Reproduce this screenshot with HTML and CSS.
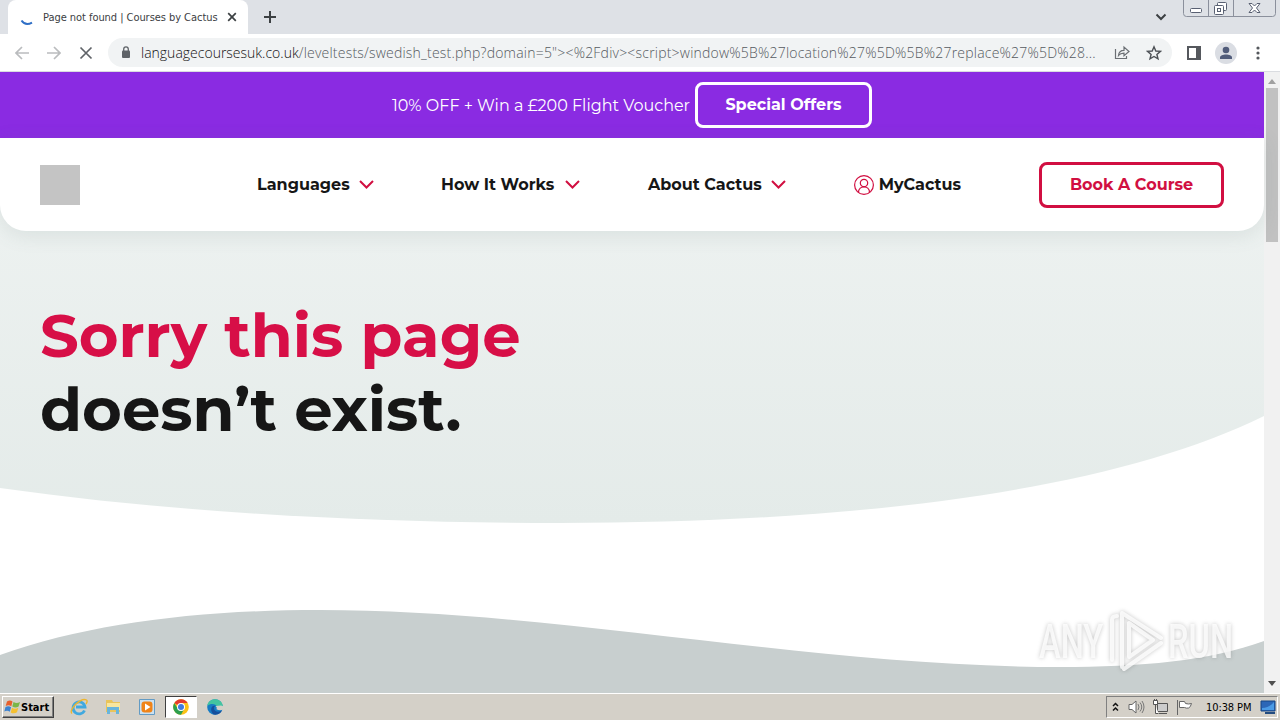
FILE: index.html
```html
<!DOCTYPE html>
<html lang="en">
<head>
<meta charset="UTF-8">
<meta name="viewport" content="width=device-width, initial-scale=1.0">
<title>Page not found | Courses by Cactus</title>
<link rel="stylesheet" href="styles.css">
</head>
<body>
<div class="tab-strip">
    <div class="tab">
        <svg class="spinner" width="16" height="16" viewBox="0 0 16 16"><path d="M2.500 8.500C5 12.200 9 12.800 13 10.600" fill="none" stroke="#2f6fc6" stroke-width="2"/></svg>
        <span class="tab-title">Page not found | Courses by Cactus</span>
        <svg class="tab-close" width="10" height="10" viewBox="0 0 10 10"><path d="M1.200 1.200l7.600 7.600M8.800 1.200L1.200 8.800" stroke="#3c4043" stroke-width="1.700"/></svg>
    </div>
    <svg class="new-tab" width="12" height="12" viewBox="0 0 12 12"><path d="M6 0v12M0 6h12" stroke="#3c4043" stroke-width="2"/></svg>
    <svg class="tab-search" width="12" height="8" viewBox="0 0 12 8"><path d="M1.500 1.500L6 6l4.500-4.500" fill="none" stroke="#3c4043" stroke-width="2"/></svg>
    <svg class="window-buttons" width="94" height="18" viewBox="0 0 94 18">
        <path d="M.5 0v13.500q0 3 3 3h86q3 0 3-3V0M25.500 0v16M50.500 0v16" fill="none" stroke="#8b909c"/>
        <rect x="7.500" y="8.500" width="11" height="4" rx="1" fill="#fff" stroke="#596072"/>
        <rect x="34.500" y="2.500" width="9" height="8" rx="1" fill="#fff" stroke="#596072"/>
        <rect x="31.500" y="5.500" width="9" height="9" rx="1" fill="#fff" stroke="#596072"/>
        <rect x="34.500" y="8.500" width="3" height="3" fill="none" stroke="#596072"/>
        <path d="M66 3.500h3l2.500 2.500L74 3.500h3L73.500 8l3.500 4.500h-3L71.500 10 69 12.500h-3L69.500 8z" fill="#fff" stroke="#596072"/>
    </svg>
</div>

<div class="toolbar">
    <div class="nav-buttons">
        <svg width="14" height="14" viewBox="0 0 14 14"><path d="M14 7H1.500M7 1L1 7l6 6" fill="none" stroke="#babcbe" stroke-width="1.700"/></svg>
        <svg width="14" height="14" viewBox="0 0 14 14"><path d="M0 7h12.500M7 1l6 6-6 6" fill="none" stroke="#babcbe" stroke-width="1.700"/></svg>
        <svg width="14" height="14" viewBox="0 0 14 14"><path d="M1.500 1.500l11 11M12.500 1.500l-11 11" stroke="#5f6368" stroke-width="1.700"/></svg>
    </div>
    <div class="address-bar">
        <svg class="lock" width="10" height="13" viewBox="0 0 10 13"><rect x="1" y="4.500" width="8" height="7.500" rx="1" fill="#5f6368"/><path d="M2.700 5V3.200a2.300 2.300 0 0 1 4.600 0V5" fill="none" stroke="#5f6368" stroke-width="1.300"/></svg>
        <span class="url"><span class="host">languagecoursesuk.co.uk</span><span class="path">/leveltests/swedish_test.php?domain=5"&gt;&lt;%2Fdiv&gt;&lt;script&gt;window%5B%27location%27%5D%5B%27replace%27%5D%28...</span></span>
        <svg class="share" width="16" height="16" viewBox="0 0 16 16"><path d="M1.500 4v9.500h11V11M4.500 10.500c.3-3.500 2.200-5.200 5.500-5.200V2l5 4.500-5 4.200V8.200c-2.500 0-4.200.6-5.500 2.300z" fill="none" stroke="#6b6f74" stroke-width="1.200"/></svg>
        <svg class="star" width="16" height="16" viewBox="0 0 16 16"><path d="M8 1.800l1.800 4.200 4.600.4-3.500 3 1.100 4.500L8 11.500l-4 2.400 1.100-4.500-3.500-3 4.600-.4z" fill="none" stroke="#4d5156" stroke-width="1.400"/></svg>
    </div>
    <svg class="side-panel" width="14" height="14" viewBox="0 0 14 14"><path d="M1 1h12v12H1z" fill="#fff" stroke="#55585d" stroke-width="2"/><path d="M9 1h5v12H9z" fill="#55585d"/></svg>
    <svg class="profile" width="22" height="22" viewBox="0 0 22 22"><circle cx="11" cy="11" r="11" fill="#dadde3"/><circle cx="11" cy="8" r="3.300" fill="#515c7a"/><path d="M5 17v-1.500c0-4 12-4 12 0V17z" fill="#515c7a"/></svg>
    <svg class="menu" width="4" height="14" viewBox="0 0 4 14"><g fill="#55585d"><circle cx="2" cy="2" r="1.600"/><circle cx="2" cy="7" r="1.600"/><circle cx="2" cy="12" r="1.600"/></g></svg>
</div>

<div class="viewport">
    <div class="page">
        <div class="promo">
            <span class="promo-text">10% OFF + Win a £200 Flight Voucher</span>
            <a class="btn btn-light">Special Offers</a>
        </div>
        <div class="hero">
            <svg class="waves" width="1264" height="555" viewBox="0 0 1264 555">
                <defs>
                    <linearGradient id="heroFill" x1="0" y1="0" x2="0" y2="1">
                        <stop offset="0" stop-color="#eff3f2"/>
                        <stop offset="1" stop-color="#e4ebe9"/>
                    </linearGradient>
                </defs>
                <path d="M0 0H1264V278C1110 354 850 385 560 385C360 385 170 374 0 350Z" fill="url(#heroFill)"/>
                <path d="M0 517C90 485 200 472 320 472C560 472 810 529 1060 529C1140 529 1210 523 1264 503V555H0Z" fill="#c8cfcf"/>
            </svg>
            <header class="site-header">
                <div class="logo"></div>
                <nav class="nav">
                    <a class="nav-item languages">Languages <svg width="15" height="9" viewBox="0 0 15 9"><path d="M1 1l6.500 6.500L14 1"/></svg></a>
                    <a class="nav-item how">How It Works <svg width="15" height="9" viewBox="0 0 15 9"><path d="M1 1l6.500 6.500L14 1"/></svg></a>
                    <a class="nav-item about">About Cactus <svg width="15" height="9" viewBox="0 0 15 9"><path d="M1 1l6.500 6.500L14 1"/></svg></a>
                    <a class="nav-item account"><svg width="20" height="20" viewBox="0 0 20 20"><circle cx="10" cy="10" r="9.400"/><circle cx="10" cy="8" r="3.700"/><path d="M4.500 17.500c0-7.500 11-7.500 11 0"/></svg> MyCactus</a>
                </nav>
                <a class="btn btn-red">Book A Course</a>
            </header>
            <h1><span class="line-red">Sorry this page</span><span class="line-dark">doesn’t exist.</span></h1>
        </div>
    </div>
    <div class="scrollbar">
        <svg width="8" height="5" viewBox="0 0 8 5"><path d="M0 5l4-5 4 5z" fill="#a0a0a0"/></svg>
        <div class="thumb"></div>
        <svg width="8" height="5" viewBox="0 0 8 5"><path d="M0 0l4 5 4-5z" fill="#505050"/></svg>
    </div>
    <div class="watermark">
        <span class="any">ANY</span>
        <svg width="60" height="64" viewBox="0 0 60 64"><path d="M7 51V11q0-4 5-4M17 58V4l39 25M19 60l37-26M24 14v34l24-17z" fill="none" stroke="#fff" stroke-opacity=".8" stroke-width="4" stroke-linejoin="round" stroke-linecap="round"/></svg>
        <span class="run">RUN</span>
    </div>
</div>

<div class="taskbar">
    <div class="start">
        <svg width="17" height="16" viewBox="0 0 17 16"><path d="M3 2.500q3-2 5.500 0L7.300 7.300q-2.500-2-5.600-.3z" fill="#e8602c"/><path d="M9.500 3q3 2 6.500 0l-1.400 4.600q-3 2-6.300 0z" fill="#7ab648"/><path d="M1.500 8q3-1.800 5.600.2l-1.300 4.600q-2.500-1.800-5.500-.2z" fill="#3d83d0"/><path d="M8 8.800q3 2 6.300 0L13 13.300q-3 2-6.300.2z" fill="#f5c030"/></svg>
        <span>Start</span>
    </div>
    <div class="launchers">
        <div class="launcher"><svg width="18" height="18" viewBox="0 0 18 18"><path d="M14.500 12.500A6 6 0 1 1 15 9H6" fill="none" stroke="#41a9df" stroke-width="2.800"/><path d="M2 15.500C-2 12 11-1 16.500 2c1 .8.500 2.500-.5 4" fill="none" stroke="#edb62f" stroke-width="1.400"/></svg></div>
        <div class="launcher"><svg width="18" height="18" viewBox="0 0 18 18"><path d="M2 2h6l1 2h7v10H2z" fill="#e9c45b"/><path d="M3 5h13v7H3z" fill="#f8e69e"/><path d="M3 16V9h12v7h-3v-4H6v4z" fill="#69b5dc"/></svg></div>
        <div class="launcher"><svg width="18" height="18" viewBox="0 0 18 18"><path d="M1.500 1.500h15v15h-15z" fill="#cce1f0" stroke="#639bc4"/><rect x="3.500" y="3.500" width="11" height="11" rx="3" fill="#f08418"/><path d="M7 5.500l5.500 3.500L7 12.500z" fill="#fff"/></svg></div>
        <div class="launcher active"><svg width="18" height="18" viewBox="0 0 18 18"><circle cx="9" cy="9" r="7.800" fill="#fbc116"/><path d="M9 9L2.300 5A7.800 7.800 0 0 1 15.700 5H9z" fill="#e33b2e"/><path d="M2.300 5A7.800 7.800 0 0 0 9 16.800l3.200-5.900L9 9H4.700z" fill="#2d9f4e"/><circle cx="9" cy="9" r="4" fill="#fff"/><circle cx="9" cy="9" r="3" fill="#3f7be0"/></svg></div>
        <div class="launcher"><svg width="18" height="18" viewBox="0 0 18 18"><circle cx="9" cy="9" r="7.800" fill="#167bc4"/><path d="M1.300 8C2-1 16-1 16.800 8c0 3-3.500 4-6 2.700 2-3.700-5-6.700-9.500-2.700z" fill="#43c5a0"/><path d="M16 12.500c-3 2-8 1.500-8-2.500 0-1 .6-1.700 1.500-2.200C5 7 3.500 12 7.500 16.500c4 .8 7.500-1.500 8.500-4z" fill="#164f9c"/><path d="M9.500 8q2 1.500 1 3.200 3 1.800 7 .3l.5-3-3-1z" fill="#d4d0c8"/></svg></div>
    </div>
    <div class="tray">
        <svg width="7" height="10" viewBox="0 0 7 10"><path d="M1 4l2.500-2.500L6 4M1 8.500L3.500 6 6 8.500" fill="none" stroke="#111" stroke-width="1.500"/></svg>
        <svg class="volume" width="17" height="14" viewBox="0 0 17 14"><path d="M1 4.500h3L8 1v12L4 9.500H1z" fill="#fff" stroke="#666"/><path d="M10 4q2 3 0 6M12 2.500q3.500 4.500 0 9M14 1q4 6 0 12" fill="none" stroke="#777"/></svg>
        <svg class="network" width="17" height="16" viewBox="0 0 17 16"><path d="M5.500 4.500h10v8h-10z" fill="#ccc" stroke="#555"/><path d="M7 14.500h8" stroke="#555"/><path d="M1.500 1.500h4v4h-4zM3.500 6v8.500h3M2.500 0v2M4.500 0v2" fill="#fff" stroke="#555"/></svg>
        <svg class="flag" width="17" height="15" viewBox="0 0 17 15"><path d="M1.500 0v15M3.500 1.500h5l1 2q3 1 6 0-1 4-3 4.500-2 .5-4-.5h-5z" fill="#fff" stroke="#666"/></svg>
        <span class="clock">10:38 PM</span>
        <svg class="desktop" width="16" height="14" viewBox="0 0 16 14"><path d="M1 1h14v10H1z" fill="#2c67b7" stroke="#164783"/><path d="M2 8q7 0 12-6v8H2z" fill="#4b9be5"/><path d="M5 13h10" stroke="#234c80" stroke-width="2"/></svg>
    </div>
</div>
</body>
</html>
```
FILE: styles.css
```css
* {
    box-sizing: border-box;
}

body {
    margin: 0;
    width: 1280px;
    height: 720px;
    overflow: hidden;
    display: flex;
    flex-direction: column;
    font-family: Montserrat, Inter, sans-serif;
    background-color: #fff;
}

svg {
    display: block;
    flex-shrink: 0;
}

/* browser */
.tab-strip {
    height: 34px;
    flex-shrink: 0;
    display: flex;
    align-items: flex-start;
    background-color: #dee1e6;
}

.tab {
    width: 240px;
    height: 34px;
    margin-left: 8px;
    padding: 0 11px;
    display: flex;
    align-items: center;
    background-color: #fff;
    border-radius: 8px 8px 0 0;
}

.tab-title {
    width: 174px;
    margin-left: 8px;
    font-family: Tahoma, "DejaVu Sans Condensed", sans-serif;
    font-size: 11px;
    letter-spacing: -0.05px;
    color: #3c4043;
    white-space: nowrap;
}

.spinner {
    margin-top: 5px;
}

.tab-close {
    margin-left: 10px;
}

.new-tab {
    margin: 11px 0 0 16px;
}

.tab-search {
    margin: 13px 16px 0 auto;
}

.window-buttons {
    margin-right: 3px;
}

.toolbar {
    height: 38px;
    flex-shrink: 0;
    display: flex;
    align-items: center;
    border-bottom: 1px solid #dadce0;
}

.nav-buttons {
    display: flex;
    gap: 18px;
    width: 94px;
    margin-left: 15px;
}

.address-bar {
    width: 1064px;
    height: 29px;
    margin-left: -1px;
    padding: 0 10px 0 13px;
    display: flex;
    align-items: center;
    background-color: #f1f3f4;
    border-radius: 15px;
}

.url {
    width: 957px;
    margin-left: 10px;
    font-family: "Open Sans", sans-serif;
    font-size: 14px;
    font-weight: 300;
    white-space: nowrap;
}

.host {
    color: #111;
}

.path {
    color: #555a60;
    letter-spacing: 0.21px;
}

.share {
    margin-left: 17px;
}

.star {
    margin-left: 16px;
}

.side-panel {
    margin-left: 15px;
}

.profile {
    margin-left: 14px;
}

.menu {
    margin-left: 19px;
}

/* website */
.viewport {
    position: relative;
    height: 621px;
    flex-shrink: 0;
    display: flex;
}

.page {
    width: 1264px;
}

.promo {
    height: 66px;
    display: flex;
    align-items: center;
    background-color: #8a2be2;
    color: #fff;
}

.promo-text {
    width: 299px;
    margin-left: 392px;
    font-size: 16px;
    font-weight: 400;
    white-space: nowrap;
}

.btn {
    height: 46px;
    display: flex;
    align-items: center;
    justify-content: center;
    border: 3px solid;
    border-radius: 8px;
    font-size: 16px;
    font-weight: 700;
    white-space: nowrap;
}

.btn-light {
    width: 177px;
    margin-left: 4px;
    padding-bottom: 1px;
}

.btn-red {
    width: 185px;
    margin-left: auto;
    color: #d10f41;
}

.hero {
    position: relative;
    height: 555px;
}

/* curved background behind the header and title */
.waves {
    position: absolute;
    top: 0;
    left: 0;
}

.site-header {
    position: relative;
    height: 93px;
    padding: 0 40px;
    display: flex;
    align-items: center;
    background-color: #fff;
    border-radius: 0 0 26px 26px;
    box-shadow: 0 4px 20px rgba(90, 120, 110, 0.14);
}

.logo {
    width: 40px;
    height: 40px;
    background-color: #c4c4c4;
}

.nav {
    display: flex;
    margin-left: 177px;
}

.nav-item {
    display: flex;
    align-items: center;
    justify-content: space-between;
    font-size: 16px;
    font-weight: 700;
    color: #161616;
    white-space: nowrap;
}

.nav-item svg {
    fill: none;
    stroke: #d10f41;
    stroke-width: 2;
}

.languages {
    width: 117px;
}

.how {
    width: 139px;
    margin-left: 67px;
}

.about {
    width: 138px;
    margin-left: 68px;
}

.account {
    width: 107px;
    margin-left: 68px;
}

.account svg {
    stroke-width: 1.2;
}

h1 {
    position: relative;
    margin: 67px 0 0 40px;
    font-size: 60.8px;
    line-height: 74px;
    font-weight: 700;
}

h1 span {
    display: block;
}

.line-red {
    color: #d70f47;
}

.line-dark {
    color: #161616;
}

.scrollbar {
    width: 16px;
    padding: 7px 0;
    display: flex;
    flex-direction: column;
    align-items: center;
    background-color: #f1f1f1;
}

.thumb {
    width: 12px;
    height: 154px;
    margin: 4px 0 auto;
    background-color: #c1c1c1;
}

.watermark {
    position: absolute;
    left: 1039px;
    top: 537px;
    display: flex;
    align-items: center;
    font-family: Roboto, sans-serif;
    font-size: 48px;
    font-weight: 500;
    color: rgba(255, 255, 255, 0.8);
    filter: drop-shadow(0 0 2px rgba(80, 80, 80, 0.4));
}

.any,
.run {
    width: 66px;
    transform: scaleX(0.68);
    transform-origin: left;
}

.run {
    margin-left: 3px;
}

/* taskbar */
.taskbar {
    height: 27px;
    flex-shrink: 0;
    padding: 0 2px;
    display: flex;
    align-items: center;
    background-color: #d4d0c8;
    border-top: 1px solid #fff;
    font-family: Tahoma, "DejaVu Sans Condensed", sans-serif;
    font-size: 11px;
    color: #000;
}

.start {
    width: 52px;
    height: 22px;
    padding-left: 1px;
    display: flex;
    align-items: center;
    border: 1px solid;
    border-color: #fff #404040 #404040 #fff;
    box-shadow: inset -1px -1px #808080;
    font-weight: 700;
}

.launchers {
    display: flex;
    margin-left: 9px;
    gap: 2px;
}

.launcher {
    width: 32px;
    height: 22px;
    display: flex;
    align-items: center;
    justify-content: center;
}

.launcher.active {
    background-color: #fff;
    border: 1px solid;
    border-color: #404040 #fff #fff #404040;
}

.tray {
    width: 172px;
    height: 22px;
    margin-left: auto;
    padding-left: 5px;
    display: flex;
    align-items: center;
    border: 1px solid;
    border-color: #808080 #fff #fff #808080;
}

.volume {
    margin-left: 9px;
}

.network {
    margin-left: 7px;
}

.flag {
    margin-left: 7px;
}

.clock {
    width: 46px;
    margin-left: 13px;
    letter-spacing: -0.1px;
    white-space: nowrap;
}

.desktop {
    margin-left: 8px;
}
```
